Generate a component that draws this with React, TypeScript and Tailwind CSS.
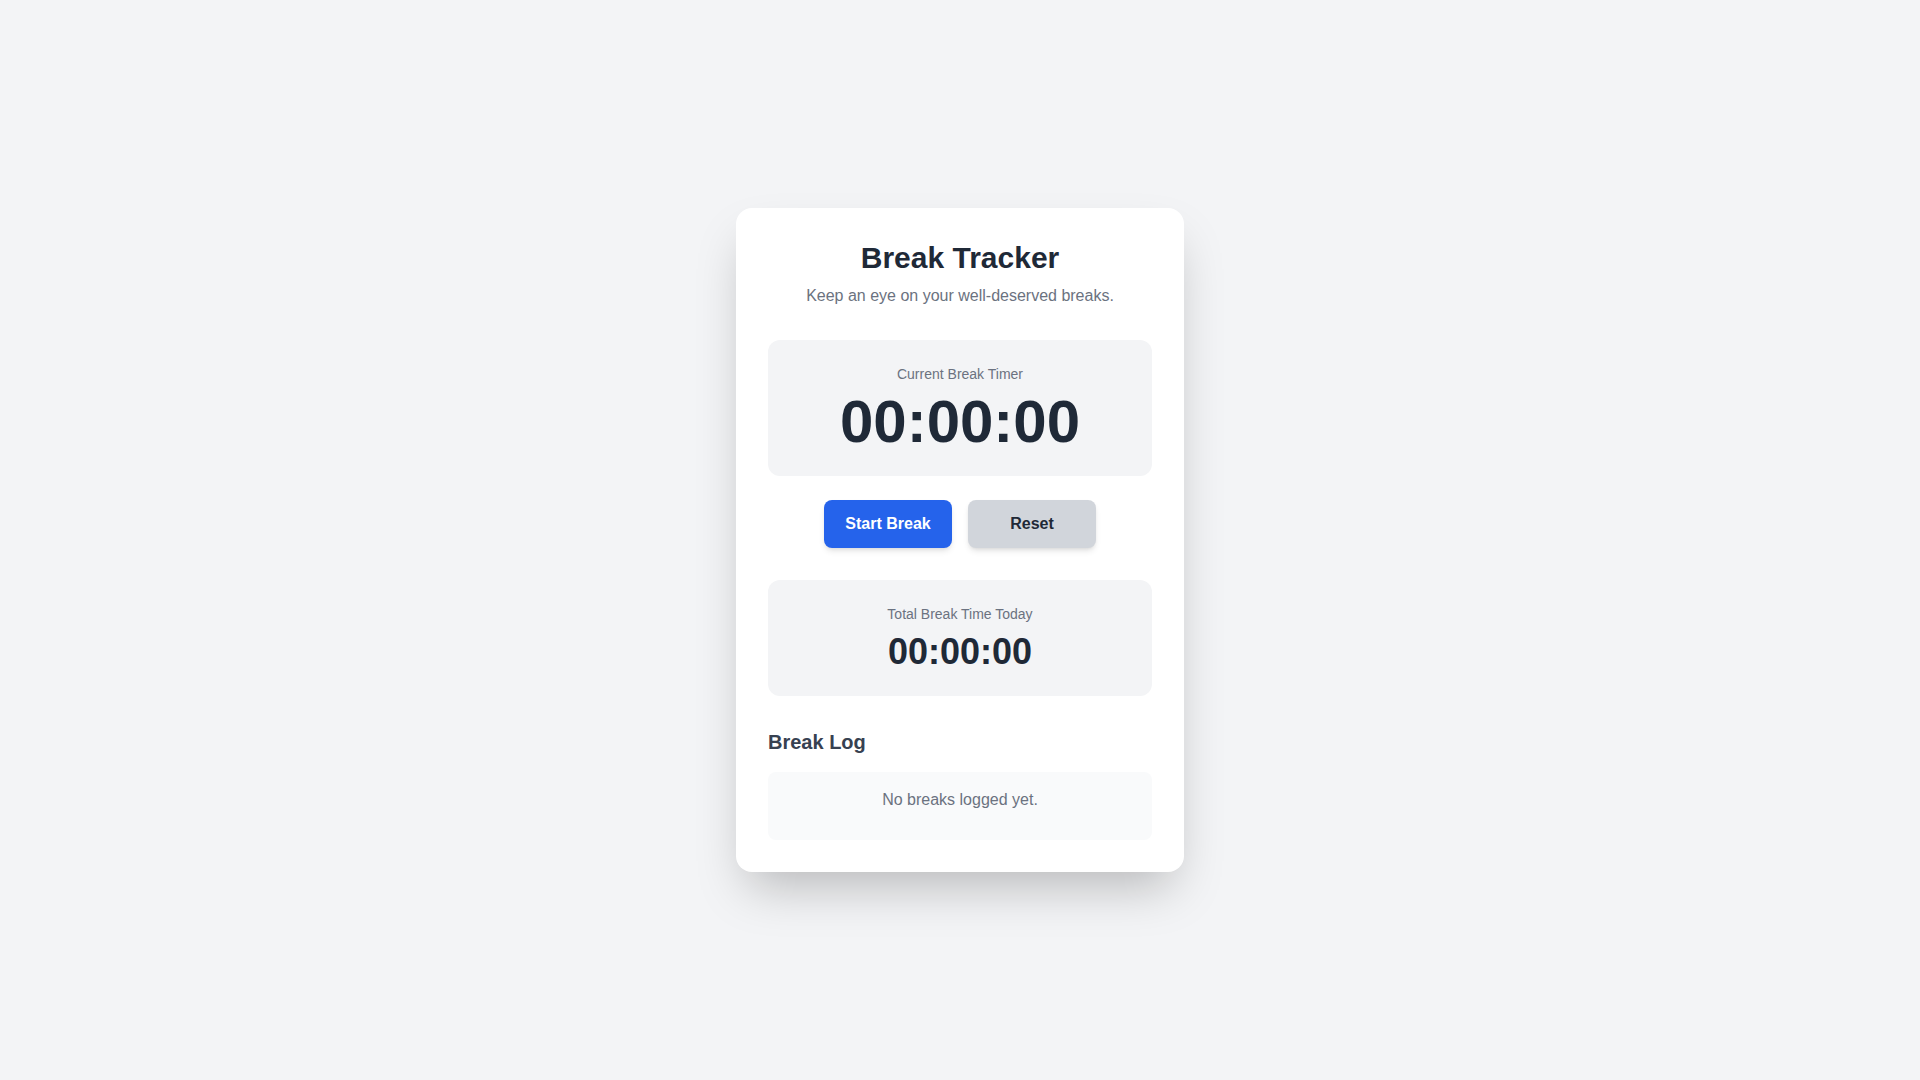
import { useEffect, useState } from "react";

function formatTime(total: number) {
  const parts = [Math.floor(total / 3600), Math.floor(total / 60) % 60, total % 60];
  return parts.map((n) => String(n).padStart(2, "0")).join(":");
}

export default function App() {
  const [running, setRunning] = useState(false);
  const [seconds, setSeconds] = useState(0);
  const [log, setLog] = useState<number[]>([]);

  useEffect(() => {
    if (!running) return;
    const id = setInterval(() => setSeconds((s) => s + 1), 1000);
    return () => clearInterval(id);
  }, [running]);

  const toggle = () => {
    if (running) {
      setLog([...log, seconds]);
      setSeconds(0);
    }
    setRunning(!running);
  };

  const reset = () => {
    setRunning(false);
    setSeconds(0);
    setLog([]);
  };

  const total = log.reduce((a, b) => a + b, 0);

  return (
    <main className="flex min-h-screen items-center justify-center bg-[#f3f4f6] p-4 font-['Liberation_Sans',Arial,sans-serif]">
      <div className="w-full max-w-md rounded-2xl bg-white p-8 shadow-2xl">
        <header className="mb-8 text-center">
          <h1 className="text-3xl font-bold text-[#1f2937]">Break Tracker</h1>
          <p className="mt-2 text-[#6b7280]">Keep an eye on your well-deserved breaks.</p>
        </header>

        <section className="mb-6 rounded-xl bg-[#f3f4f6] p-6 text-center">
          <p className="text-sm text-[#6b7280]">Current Break Timer</p>
          <p className="mt-2 text-6xl font-bold text-[#1f2937]">{formatTime(seconds)}</p>
        </section>

        <div className="mb-8 flex justify-center gap-4">
          <button
            type="button"
            onClick={toggle}
            className="w-32 rounded-lg bg-[#2563eb] py-3 font-semibold text-white shadow-md hover:bg-[#1d4ed8]"
          >
            {running ? "End Break" : "Start Break"}
          </button>
          <button
            type="button"
            onClick={reset}
            className="w-32 rounded-lg bg-[#d1d5db] py-3 font-semibold text-[#1f2937] shadow-md hover:bg-[#9ca3af]"
          >
            Reset
          </button>
        </div>

        <section className="mb-8 rounded-xl bg-[#f3f4f6] p-6 text-center">
          <p className="text-sm text-[#6b7280]">Total Break Time Today</p>
          <p className="mt-2 text-4xl font-bold text-[#1f2937]">{formatTime(total)}</p>
        </section>

        <section>
          <h2 className="mb-4 text-xl font-semibold text-[#374151]">Break Log</h2>
          <ul className="max-h-48 space-y-3 overflow-y-auto rounded-lg bg-[#f9fafb] p-4 pb-7">
            {log.length === 0 && <li className="text-center text-[#6b7280]">No breaks logged yet.</li>}
            {log.map((duration, i) => (
              <li key={i} className="flex justify-between text-[#374151]">
                <span>Break {i + 1}</span>
                <span>{formatTime(duration)}</span>
              </li>
            ))}
          </ul>
        </section>
      </div>
    </main>
  );
}
